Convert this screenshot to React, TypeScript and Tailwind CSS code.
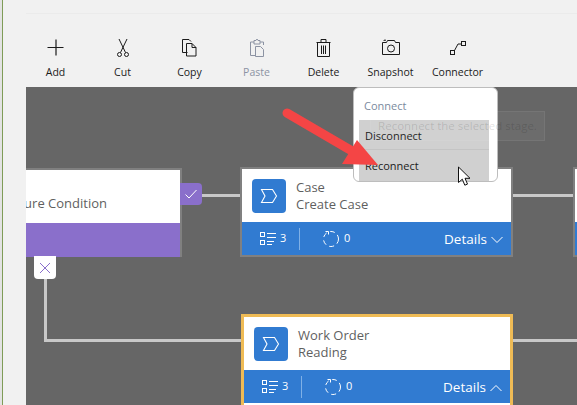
import type { ReactNode } from "react";

const ToolIcon = ({ children }: { children: ReactNode }) => (
  <svg width="24" height="24" viewBox="0 0 24 24" fill="none" stroke="currentColor" strokeWidth="1">
    {children}
  </svg>
);

const tools: { label: string; muted?: boolean; icon: ReactNode }[] = [
  {
    label: "Add",
    icon: <path d="M12 3.500v16M3.500 11.500h16" strokeWidth="1.200" />,
  },
  {
    label: "Cut",
    icon: (
      <>
        <path d="M8 3l6.500 13.500M16 3L9.500 16.500" />
        <circle cx="8.500" cy="18.500" r="2" />
        <circle cx="15.500" cy="18.500" r="2" />
      </>
    ),
  },
  {
    label: "Copy",
    icon: (
      <>
        <path d="M9.500 16.500H4.500V3.500h6.500l2 2" />
        <path d="M8.500 7.500h5.500l4 4v8.500H8.500z" />
        <path d="M14 7.500v4h4" />
      </>
    ),
  },
  {
    label: "Paste",
    muted: true,
    icon: (
      <>
        <path d="M9 6H5.500v13.500H10M15 6h3.500v3" />
        <path d="M9 6V4.500h2l1-1.500 1 1.500h2V8H9z" />
        <path d="M10.500 10.500h5l3 3v7h-8z" />
      </>
    ),
  },
  {
    label: "Delete",
    icon: (
      <>
        <path d="M4.500 6.500h14M9 6.500v-3h5v3M5.500 6.500v14h12V6.500" />
        <path d="M9.500 9.500v8.500M11.500 9.500v8.500M13.500 9.500v8.500" />
      </>
    ),
  },
  {
    label: "Snapshot",
    icon: (
      <>
        <path d="M3.500 6.500h4l1-2h7l1 2h4v12h-17z" />
        <circle cx="12" cy="12.500" r="3.500" />
        <path d="M5 5V4.200h2" />
      </>
    ),
  },
  {
    label: "Connector",
    icon: (
      <>
        <rect x="4.500" y="14.500" width="4" height="4" />
        <rect x="15.500" y="5.500" width="4" height="4" />
        <path d="M8.500 14.500l3.500-6.500h3.500" />
      </>
    ),
  },
];

const StageIcon = () => (
  <div className="flex h-[34px] w-[34px] shrink-0 items-center justify-center rounded-[4px] bg-[#317bd1]">
    <svg width="18" height="16" viewBox="0 0 18 16" fill="none" stroke="white" strokeWidth="1.100">
      <path d="M1.500 1.500h11l4 6.500-4 6.500h-11l3.500-6.500z" />
    </svg>
  </div>
);

const StepsIcon = () => (
  <svg width="18" height="16" viewBox="0 0 18 16" fill="none" stroke="white" strokeWidth="1">
    <rect x="1.500" y="1.500" width="4" height="4" />
    <rect x="1.500" y="9.500" width="4" height="4" />
    <path d="M8 2.500h9M8 6.500h9M8 10.500h7M8 13.500h5" />
  </svg>
);

const ProgressIcon = () => (
  <svg width="18" height="18" viewBox="0 0 18 18" fill="none" stroke="white" strokeWidth="1">
    <circle cx="9" cy="9" r="7.500" strokeDasharray="5 3.500" />
    <path d="M3.500 1.500h3v3" />
  </svg>
);

const Chevron = ({ up }: { up?: boolean }) => (
  <svg width="12" height="8" viewBox="0 0 12 8" fill="none" stroke="white" strokeWidth="1">
    <path d={up ? "M.5 7L6 1.500 11.500 7" : "M.5 1L6 6.500 11.500 1"} />
  </svg>
);

const StageBand = ({ up }: { up?: boolean }) => (
  <div className="flex h-[33px] items-center bg-[#317bd1] text-[13.500px] text-white">
    <div className="ml-[17px] flex w-[40px] items-center gap-[3px]">
      <StepsIcon />
      <span className="text-[11px]">3</span>
    </div>
    <div className="h-[22px] w-px bg-[#7fb0e6]" />
    <div className="ml-[22px] flex items-center gap-[4px]">
      <ProgressIcon />
      <span className="text-[11px]">0</span>
    </div>
    <div className="ml-auto mr-[8px] flex items-center gap-[4px] pt-[2px]">
      <span>Details</span>
      <Chevron up={up} />
    </div>
  </div>
);

const StageText = ({ top, bottom }: { top: string; bottom: string }) => (
  <div className="text-[13px] leading-[17px] text-[#5f5f5f]">
    <div>{top}</div>
    <div>{bottom}</div>
  </div>
);

export default function App() {
  return (
    <div
      className="flex h-[405px] w-[577px] overflow-hidden bg-[#f1f1f1]"
      style={{ fontFamily: '"Open Sans", "Noto Sans", sans-serif' }}
    >
      <div className="flex w-[26px] shrink-0">
        <div className="w-[2px] bg-[#e3e3e3]" />
        <div className="w-px bg-[#7f9c57]" />
      </div>

      <div className="flex min-w-0 flex-1 flex-col">
        <div className="mt-[13px] h-[74px] border-t border-[#ebebeb]">
          <div className="ml-[-4px] mt-[22px] flex">
            {tools.map((t) => (
              <div
                key={t.label}
                className={`flex w-[67px] shrink-0 flex-col items-center ${t.muted ? "text-[#8c93a3]" : "text-[#1b1b1b]"}`}
              >
                <ToolIcon>{t.icon}</ToolIcon>
                <span className="mt-[5px] text-[10.500px] leading-[14px]">{t.label}</span>
              </div>
            ))}
          </div>
        </div>

        <div className="relative flex-1 overflow-hidden bg-[#666666]">
          {/* connectors */}
          <div className="absolute left-[176px] top-[107px] h-[3px] w-[40px] bg-[#c8c8c8]" />
          <div className="absolute left-[487px] top-[107px] h-[3px] w-[62px] bg-[#c8c8c8]" />
          <div className="absolute left-[18px] top-[190px] h-[64px] w-[3px] bg-[#c8c8c8]" />
          <div className="absolute left-[18px] top-[252px] h-[3px] w-[200px] bg-[#c8c8c8]" />
          <div className="absolute left-[485px] top-[252px] h-[3px] w-[70px] bg-[#c8c8c8]" />

          {/* condition node */}
          <div className="absolute left-[-60px] top-[81px] h-[89px] w-[216px] border-2 border-[#808080] bg-white">
            <div className="flex h-[53px] items-end justify-end pb-[10px] pr-[73px] text-[13px] text-[#5f5f5f]">
              Failure Condition
            </div>
            <div className="h-[34px] bg-[#8a6fcb]" />
          </div>
          <div className="absolute left-[154px] top-[96px] flex h-[22px] w-[22px] items-center justify-center rounded-r-[4px] bg-[#8a6fcb]">
            <svg width="14" height="12" viewBox="0 0 14 12" fill="none" stroke="white" strokeWidth="1">
              <path d="M1.500 6.500l3.500 3.500 7.500-8" />
            </svg>
          </div>
          <div className="absolute left-[8px] top-[169px] flex h-[23px] w-[22px] items-center justify-center rounded-b-[4px] bg-white">
            <svg width="12" height="12" viewBox="0 0 12 12" fill="none" stroke="#8a6fcb" strokeWidth="1">
              <path d="M1 1l10 10M11 1L1 11" />
            </svg>
          </div>

          {/* case node */}
          <div className="absolute left-[214px] top-[80px] h-[90px] w-[273px] border-2 border-[#808080] bg-white">
            <div className="flex h-[53px] items-center gap-[10px] pl-[10px]">
              <StageIcon />
              <StageText top="Case" bottom="Create Case" />
            </div>
            <StageBand />
          </div>

          {/* next node, cut off by the window edge */}
          <div className="absolute left-[547px] top-[80px] h-[90px] w-[60px] border-2 border-[#808080] bg-white">
            <div className="h-[53px]" />
            <div className="h-[33px] bg-[#317bd1]" />
          </div>

          {/* work order node */}
          <div className="absolute left-[215px] top-[227px] h-[100px] w-[272px] border-[3px] border-[#efbb55] bg-white">
            <div className="flex h-[53px] items-center gap-[10px] pl-[10px]">
              <StageIcon />
              <StageText top="Work Order" bottom="Reading" />
            </div>
            <StageBand up />
          </div>

          {/* connect menu */}
          <div className="absolute left-[327px] top-0 h-[95px] w-[145px] overflow-hidden rounded-[6px] border border-[#bdbdbd] bg-white">
            <div className="ml-[10px] mt-[10px] text-[11px] leading-[15px] text-[#7b8a9e]">Connect</div>
            <div className="ml-[5px] mt-[7px] w-[130px] bg-[#d0d0d0] text-[11px] text-[#1b1b1b]">
              <div className="flex h-[30px] items-center border-b border-[#c4c4c4] pl-[6px] pt-[3px]">Disconnect</div>
              <div className="flex h-[32px] items-center pl-[6px]">Reconnect</div>
            </div>
          </div>

          {/* faded tooltip */}
          <div className="absolute left-[344px] top-[24px] flex h-[30px] w-[175px] items-center justify-center border border-[#ffffff10] bg-[#ffffff0a] text-[11.500px] text-[#00000022]">
            Reconnect the selected stage.
          </div>

          {/* annotation arrow */}
          <svg className="absolute left-[250px] top-[15px]" width="110" height="70" viewBox="0 0 110 70">
            <path d="M11 11L76 49" stroke="#f44545" strokeWidth="9" strokeLinecap="round" />
            <path d="M81 38L102 63 66 62z" fill="#f44545" />
          </svg>

          {/* mouse pointer */}
          <svg className="absolute left-[431px] top-[79px]" width="16" height="21" viewBox="0 0 16 21">
            <path d="M1.500 1v15.500l3.800-3.300 2.500 6 2.700-1.100-2.500-5.800h5z" fill="white" stroke="#111" strokeWidth="1" />
          </svg>
        </div>
      </div>
    </div>
  );
}
